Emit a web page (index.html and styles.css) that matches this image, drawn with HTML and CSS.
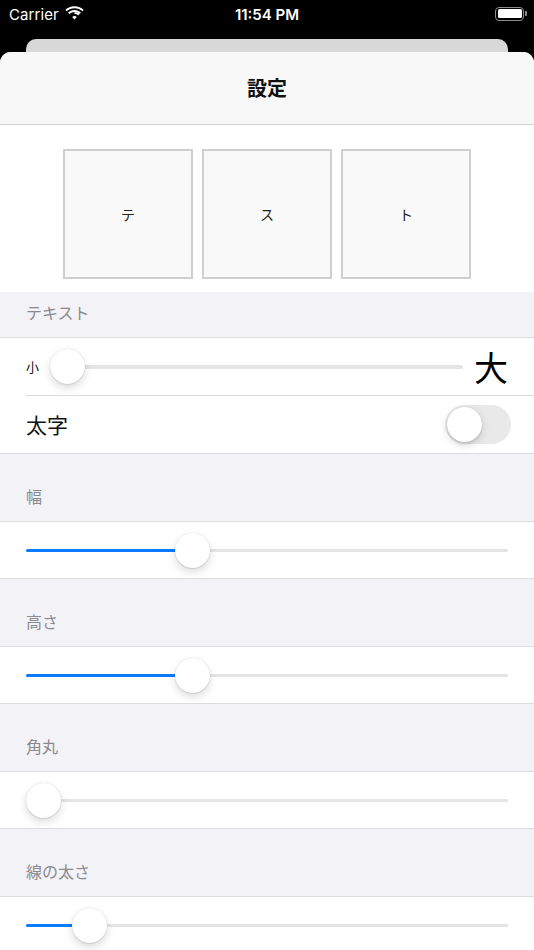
FILE: index.html
```html
<!DOCTYPE html>
<html lang="ja">
<head>
<meta charset="utf-8">
<link rel="stylesheet" href="styles.css">
</head>
<body>
<div class="status">
  <div class="status-left">
    <span class="carrier">Carrier</span>
    <svg class="wifi" width="19" height="14" viewBox="0 0 19 14">
      <path d="M9.5 2.2c3 0 5.8 1.1 7.9 3.1l1.3-1.4C16.2 1.5 13 0.2 9.5 0.2S2.8 1.5 0.3 3.9l1.3 1.4C3.7 3.3 6.5 2.2 9.5 2.2z" fill="#fff"/>
      <path d="M9.5 6.1c1.9 0 3.7 0.7 5.1 2l1.3-1.4C14.2 5.1 11.9 4.1 9.5 4.1S4.8 5.1 3.1 6.7l1.3 1.4C5.8 6.8 7.6 6.1 9.5 6.1z" fill="#fff"/>
      <path d="M9.5 10c0.9 0 1.7 0.3 2.3 0.9L9.5 13.4 7.2 10.9C7.8 10.3 8.6 10 9.5 10z M9.5 8c1.4 0 2.7 0.5 3.7 1.4l1.3-1.4C13.1 6.8 11.4 6.1 9.5 6.1z" fill="#fff"/>
    </svg>
  </div>
  <div class="time">11:54 PM</div>
  <div class="battery"><div class="battery-body"><div class="battery-fill"></div></div><div class="battery-nub"></div></div>
</div>
<div class="back-card"></div>
<div class="sheet">
  <div class="nav"><span class="nav-title">設定</span></div>
  <div class="preview">
    <div class="tile">テ</div>
    <div class="tile">ス</div>
    <div class="tile">ト</div>
  </div>

  <div class="section-header first">テキスト</div>
  <div class="group">
    <div class="row size-row">
      <span class="small-label">小</span>
      <div class="slider" style="--v:0"><div class="track"></div><div class="fill"></div><div class="thumb"></div></div>
      <span class="big-label">大</span>
    </div>
    <div class="sep"></div>
    <div class="row toggle-row">
      <span class="row-label">太字</span>
      <div class="toggle"><div class="knob"></div></div>
    </div>
  </div>

  <div class="section-header">幅</div>
  <div class="group">
    <div class="row slider-row">
      <div class="slider" style="--v:0.334"><div class="track"></div><div class="fill"></div><div class="thumb"></div></div>
    </div>
  </div>

  <div class="section-header">高さ</div>
  <div class="group">
    <div class="row slider-row">
      <div class="slider" style="--v:0.334"><div class="track"></div><div class="fill"></div><div class="thumb"></div></div>
    </div>
  </div>

  <div class="section-header">角丸</div>
  <div class="group">
    <div class="row slider-row">
      <div class="slider" style="--v:0"><div class="track"></div><div class="fill"></div><div class="thumb"></div></div>
    </div>
  </div>

  <div class="section-header">線の太さ</div>
  <div class="group">
    <div class="row slider-row">
      <div class="slider" style="--v:0.102"><div class="track"></div><div class="fill"></div><div class="thumb"></div></div>
    </div>
  </div>
</div>
</body>
</html>
```
FILE: styles.css
```css
* { box-sizing: border-box; }
html, body {
  margin: 0;
  padding: 0;
  background: #000;
  width: 534px;
  height: 950px;
  overflow: hidden;
  font-family: "Noto Sans CJK JP", "Noto Sans", sans-serif;
}
.status {
  height: 28px;
  display: flex;
  align-items: center;
  justify-content: space-between;
  padding: 0 7px 0 9px;
  color: #fff;
  position: relative;
  font-family: "Inter", "Liberation Sans", sans-serif;
}
.status-left {
  display: flex;
  align-items: center;
  gap: 6px;
}
.carrier {
  font-size: 15px;
  letter-spacing: 0.1px;
}
.wifi { margin-top: -2px; }
.time {
  position: absolute;
  left: 0;
  right: 0;
  text-align: center;
  font-size: 15px;
  font-weight: 600;
  pointer-events: none;
}
.battery {
  display: flex;
  align-items: center;
  gap: 1px;
  margin-top: -1px;
}
.battery-body {
  width: 29px;
  height: 14px;
  border: 1.5px solid #8e8e8e;
  border-radius: 4px;
  padding: 1.5px;
}
.battery-fill {
  width: 100%;
  height: 100%;
  background: #fff;
  border-radius: 1.5px;
}
.battery-nub {
  width: 2px;
  height: 5px;
  background: #8e8e8e;
  border-radius: 0 1px 1px 0;
}
.back-card {
  margin: 11px 26px 0;
  height: 13px;
  background: #d8d8d8;
  border-radius: 10px 10px 0 0;
}
.sheet {
  background: #f2f2f7;
  border-radius: 11px 11px 0 0;
  overflow: hidden;
  height: 898px;
}
.nav {
  height: 73px;
  background: #f8f8f8;
  border-bottom: 1px solid #d2d2d4;
  display: flex;
  align-items: center;
  justify-content: center;
}
.nav-title {
  font-size: 20px;
  font-weight: 700;
  color: #111;
  margin-top: -2px;
}
.preview {
  background: #fff;
  height: 167px;
  padding-top: 24px;
  display: flex;
  justify-content: center;
  gap: 9px;
}
.tile {
  width: 130px;
  height: 130px;
  border: 2px solid #cfcfcf;
  background: #f9f9f9;
  display: flex;
  align-items: center;
  justify-content: center;
  font-size: 14px;
  color: #222;
}
.section-header {
  height: 67px;
  display: flex;
  align-items: flex-end;
  padding: 0 26px 14px;
  font-size: 16px;
  line-height: 22px;
  color: #8a8a8e;
}
.section-header.first {
  height: 45px;
}
.group {
  background: #fff;
  border-top: 1px solid #dcdce0;
  border-bottom: 1px solid #dcdce0;
}
.row {
  height: 57px;
  display: flex;
  align-items: center;
  padding: 0 26px;
}
.slider-row { height: 56px; }
.sep {
  height: 1px;
  background: #dcdce0;
  margin-left: 26px;
}
.slider {
  position: relative;
  flex: 1;
  height: 36px;
}
.track {
  position: absolute;
  left: 0;
  right: 0;
  top: 16.5px;
  height: 3.5px;
  border-radius: 2px;
  background: #e4e4e6;
}
.fill {
  position: absolute;
  left: 0;
  top: 16.5px;
  height: 3.5px;
  border-radius: 2px;
  background: #0a7aff;
  width: calc(var(--v) * (100% - 35px) + 17px);
}
.thumb {
  position: absolute;
  top: 0.5px;
  left: calc(var(--v) * (100% - 35px));
  width: 35px;
  height: 35px;
  border-radius: 50%;
  background: #fff;
  box-shadow: 0 4px 9px rgba(0,0,0,0.14), 0 0 1px rgba(0,0,0,0.2), 0 1px 1px rgba(0,0,0,0.08);
}
.small-label {
  font-size: 13px;
  color: #111;
  margin-right: 11px;
}
.big-label {
  font-size: 34px;
  line-height: 40px;
  color: #000;
  margin-left: 11px;
  margin-right: 0;
}
.toggle-row {
  justify-content: space-between;
  padding-right: 23px;
}
.row-label {
  font-size: 21px;
  color: #111;
  margin-top: -2px;
}
.toggle {
  width: 66px;
  height: 39px;
  border-radius: 20px;
  background: #e9e9ea;
  position: relative;
  padding: 2px;
}
.knob {
  width: 35px;
  height: 35px;
  border-radius: 50%;
  background: #fff;
  box-shadow: 0 3px 8px rgba(0,0,0,0.15), 0 0 1px rgba(0,0,0,0.2), 0 3px 1px rgba(0,0,0,0.05);
}
```
